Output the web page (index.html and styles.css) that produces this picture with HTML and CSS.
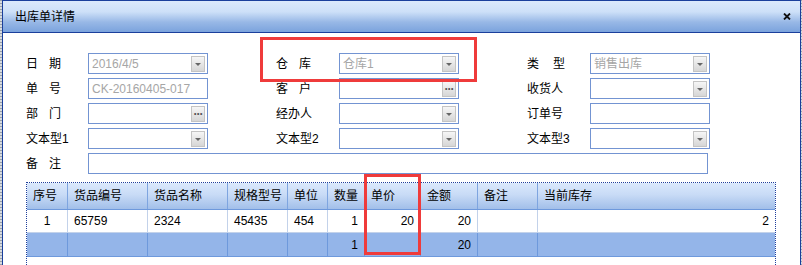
FILE: index.html
```html
<!DOCTYPE html>
<html lang="zh-CN">

<head>
    <meta charset="UTF-8">
    <title>出库单详情</title>
    <link rel="stylesheet" href="styles.css">
</head>

<body>
    <div class="window">
        <div class="titlebar">
            <span class="title">出库单详情</span>
            <svg class="close" width="8" height="7" viewBox="0 0 8 7">
                <path d="M1 0.5 L7 6.5 M7 0.5 L1 6.5" stroke="#111" stroke-width="1.8" />
            </svg>
        </div>

        <div class="content">
            <div class="form">
                <div class="lbl sp">日期</div>
                <div class="box"><span class="val">2016/4/5</span><i class="btn drop"></i></div>
                <div class="lbl sp">仓库</div>
                <div class="box"><span class="val">仓库1</span><i class="btn drop"></i></div>
                <div class="lbl sp wide">类型</div>
                <div class="box"><span class="val">销售出库</span><i class="btn drop"></i></div>

                <div class="lbl sp">单号</div>
                <div class="box"><span class="val">CK-20160405-017</span></div>
                <div class="lbl sp">客户</div>
                <div class="box"><span class="val"></span><i class="btn dots">···</i></div>
                <div class="lbl">收货人</div>
                <div class="box"><span class="val"></span><i class="btn drop"></i></div>

                <div class="lbl sp">部门</div>
                <div class="box"><span class="val"></span><i class="btn dots">···</i></div>
                <div class="lbl">经办人</div>
                <div class="box"><span class="val"></span><i class="btn drop"></i></div>
                <div class="lbl">订单号</div>
                <div class="box"><span class="val"></span></div>

                <div class="lbl">文本型1</div>
                <div class="box"><span class="val"></span><i class="btn drop"></i></div>
                <div class="lbl">文本型2</div>
                <div class="box"><span class="val"></span><i class="btn drop"></i></div>
                <div class="lbl">文本型3</div>
                <div class="box"><span class="val"></span><i class="btn drop"></i></div>

                <div class="lbl sp">备注</div>
                <div class="box memo"><span class="val"></span></div>
            </div>

            <div class="grid">
                <div class="row head">
                    <div>序号</div>
                    <div>货品编号</div>
                    <div>货品名称</div>
                    <div>规格型号</div>
                    <div>单位</div>
                    <div>数量</div>
                    <div>单价</div>
                    <div>金额</div>
                    <div>备注</div>
                    <div>当前库存</div>
                </div>
                <div class="row item">
                    <div class="c">1</div>
                    <div>65759</div>
                    <div>2324</div>
                    <div>45435</div>
                    <div>454</div>
                    <div class="r">1</div>
                    <div class="r">20</div>
                    <div class="r">20</div>
                    <div></div>
                    <div class="r">2</div>
                </div>
                <div class="row total">
                    <div></div>
                    <div></div>
                    <div></div>
                    <div></div>
                    <div></div>
                    <div class="r">1</div>
                    <div></div>
                    <div class="r">20</div>
                    <div></div>
                    <div></div>
                </div>
            </div>
        </div>

        <div class="mark mark-store"></div>
        <div class="mark mark-price"></div>
    </div>
</body>

</html>
```

FILE: styles.css
```css
html,
body {
    margin: 0;
    height: 100%;
    overflow: hidden;
}

body {
    background: repeating-linear-gradient(#9aa0a8 0 1px, #d8dce0 1px 3px);
    font-family: "Liberation Sans", "Noto Sans CJK SC", sans-serif;
    font-size: 12px;
    color: #000;
}

.window {
    position: relative;
    margin-left: 2px;
    width: 799px;
    height: 100%;
    box-sizing: border-box;
    border: 1px solid #1a3f9c;
    border-bottom: 0;
    background: #fff;
}

.titlebar {
    height: 31px;
    border-bottom: 1px solid #1a3f9c;
    background: linear-gradient(#dbe9fc 0%, #cde0f8 35%, #98b8e6 68%, #7ba3dd 100%);
    display: flex;
    align-items: center;
    justify-content: space-between;
    padding: 0 9px 0 12px;
}

.title {
    font-size: 12px;
    line-height: 14px;
    margin-top: 1px;
}

.close {
    margin-top: -1px;
}

.content {
    padding: 20px 0 0 23px;
}

.form {
    display: grid;
    grid-template-columns: 62px 120px 131px 120px 131px 120px;
    grid-auto-rows: 21px;
    row-gap: 4px;
}

.lbl {
    display: flex;
    align-items: center;
    line-height: 14px;
    white-space: nowrap;
}

.lbl:nth-child(6n+3),
.lbl:nth-child(6n+5) {
    padding-left: 68px;
}

.lbl.sp {
    letter-spacing: 11px;
}

.lbl.wide {
    letter-spacing: 14px;
}

.box {
    box-sizing: border-box;
    border: 1px solid #7394d2;
    display: flex;
    align-items: center;
    padding: 0 2px 0 3px;
}

.box.memo {
    grid-column: 2 / -1;
    margin-right: 2px;
}

.val {
    flex: 1;
    color: #a6a6a6;
    font-size: 12px;
    line-height: 14px;
    white-space: nowrap;
    overflow: hidden;
}

.btn {
    width: 14px;
    height: 16px;
    box-sizing: border-box;
    border: 1px solid #c4c4c4;
    background: linear-gradient(#f6f6f6, #d6d6d6);
    display: flex;
    align-items: center;
    justify-content: center;
    font-style: normal;
}

.btn.drop::after {
    content: "";
    border-left: 3px solid transparent;
    border-right: 3px solid transparent;
    border-top: 3px solid #666;
    margin-top: 1px;
}

.btn.dots {
    font-size: 12px;
    line-height: 10px;
    font-weight: bold;
    color: #555;
    letter-spacing: -1px;
}

.grid {
    margin-top: 8px;
    width: 750px;
    height: 83px;
    box-sizing: border-box;
    border: 1px dotted #1f3f9c;
    border-bottom: 0;
}

.row {
    display: grid;
    grid-template-columns: 41px 80px 80px 60px 40px 37px 56px 57px 60px 1fr;
}

.row div {
    box-sizing: border-box;
    border-right: 1px solid #c3d2ea;
    padding: 0 5px 0 6px;
    white-space: nowrap;
    display: flex;
    align-items: center;
    line-height: 14px;
}

.row div:last-child {
    border-right: 0;
}

.row .c {
    justify-content: center;
    padding: 0;
}

.row .r {
    justify-content: flex-end;
    padding-right: 6px;
}

.head {
    height: 26px;
    border-bottom: 1px solid #6e99dc;
    background: linear-gradient(#dbe9fc 0%, #c8dbf6 45%, #a2bfe9 100%);
}

.head div {
    border-right-color: #7ea5e0;
}

.item {
    height: 22px;
    border-bottom: 1px solid #c3d2ea;
    background: #fff;
}

.total {
    height: 23px;
    border-bottom: 1px solid #6e99dc;
    background: #94b5e9;
}

.total div {
    border-right-color: #6e99dc;
}

.mark {
    position: absolute;
    box-sizing: border-box;
    border: 3px solid #ef3b3b;
}

.mark-store {
    left: 257px;
    top: 36px;
    width: 217px;
    height: 45px;
}

.mark-price {
    left: 361px;
    top: 173px;
    width: 57px;
    height: 81px;
}
```
